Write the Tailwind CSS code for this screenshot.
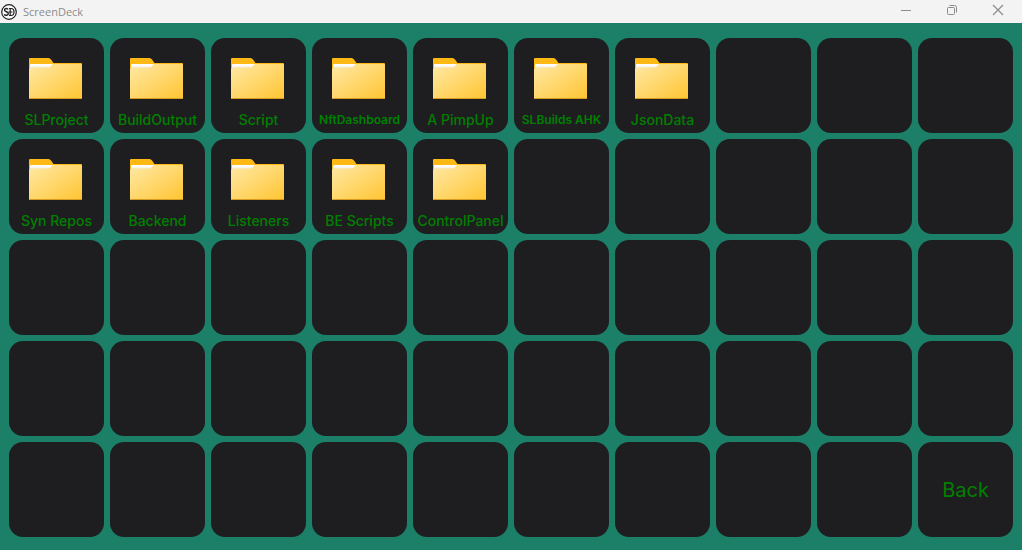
<!DOCTYPE html>
<html lang="en">
<head>
<meta charset="utf-8">
<meta name="viewport" content="width=device-width, initial-scale=1">
<title>ScreenDeck</title>
<script src="https://cdn.jsdelivr.net/npm/@tailwindcss/browser@4"></script>
</head>
<body class="flex min-h-screen flex-col bg-[#1c7f67] font-['Inter',sans-serif]">
<svg class="size-0" aria-hidden="true">
  <defs>
    <linearGradient id="front" x1="0" y1="0" x2="1" y2="1"><stop offset="0" stop-color="#ffe9a6"/><stop offset="1" stop-color="#ffc532"/></linearGradient>
    <linearGradient id="shine" x1="0" y1="0" x2="0" y2="1"><stop offset="0" stop-color="#ffffff"/><stop offset=".4" stop-color="#fbfaf6"/><stop offset="1" stop-color="#e6dcc0"/></linearGradient>
    <symbol id="folder" viewBox="0 0 53 41">
      <path d="M1 0H19.5Q21 0 22 1.5L24.5 5H52Q53 5 53 6V20H0V1Q0 0 1 0Z" fill="#ffb914"/>
      <path d="M0 11L2 9H20.500L24 6H52Q53 6 53 7V40Q53 41 52 41H1Q0 41 0 40Z" fill="url(#front)"/>
      <path d="M2 6H24L20.500 9.500H3L1 11V7Q1 6 2 6Z" fill="url(#shine)"/>
      <path d="M1 40.500H52" stroke="#d99a20" fill="none"/>
    </symbol>
  </defs>
</svg>
<header class="flex h-[23px] items-start justify-between bg-[#f3f3f3] pr-px pl-px text-[#8c8c8c]">
  <div class="flex h-full items-center gap-[6px]">
    <svg class="size-4" viewBox="0 0 16 16" fill="none" stroke="#222" aria-hidden="true">
      <circle cx="8" cy="8" r="7.300" fill="#fafafa" stroke-width="1.200"/>
      <path d="M7 5.500C6.500 4 3.500 4 3.500 6S7.300 7.500 7.300 9.500 4 12 3.300 10.200" stroke-width="1.400"/>
      <path d="M8 4.500H10C14 4.500 14 11.500 10 11.500H8M9.200 4.500V11.500M7.500 8H11.500" stroke-width="1.200"/>
    </svg>
    <h1 class="font-['Open_Sans',sans-serif] text-[11px] leading-4">ScreenDeck</h1>
  </div>
  <div class="flex">
    <button type="button" aria-label="Minimize" class="flex h-5 w-[46px] items-center justify-center"><svg class="size-3" viewBox="0 0 12 12" fill="none" stroke="currentColor"><path d="M1 6.500H11"/></svg></button>
    <button type="button" aria-label="Restore" class="flex h-5 w-[46px] items-center justify-center"><svg class="size-3" viewBox="0 0 12 12" fill="none" stroke="currentColor"><rect x="1.500" y="3.500" width="7" height="7" rx="1"/><path d="M3.500 1.500H8.500Q10.500 1.500 10.500 3.500V8.500"/></svg></button>
    <button type="button" aria-label="Close" class="flex h-5 w-[46px] items-center justify-center"><svg class="size-3" viewBox="0 0 12 12" fill="none" stroke="currentColor" stroke-width="1.200"><path d="M1 1L11 11M11 1L1 11"/></svg></button>
  </div>
</header>
<main class="grid grid-cols-10 gap-[6px] px-[9px] pt-[15px] pb-[13px] text-sm leading-5 font-medium whitespace-nowrap text-[#008000] *:flex *:aspect-square *:min-w-0 *:flex-col *:items-center *:rounded-[14px] *:bg-[#1e1e20]">
  <button type="button" class="pt-5"><svg class="mr-[2px] mb-[11px] h-[41px] w-[53px]" aria-hidden="true"><use href="#folder"/></svg>SLProject</button>
  <button type="button" class="pt-5"><svg class="mr-[2px] mb-[11px] h-[41px] w-[53px]" aria-hidden="true"><use href="#folder"/></svg>BuildOutput</button>
  <button type="button" class="pt-5"><svg class="mr-[2px] mb-[11px] h-[41px] w-[53px]" aria-hidden="true"><use href="#folder"/></svg>Script</button>
  <button type="button" class="pt-5 text-xs leading-5 font-semibold"><svg class="mr-[2px] mb-[11px] h-[41px] w-[53px]" aria-hidden="true"><use href="#folder"/></svg>NftDashboard</button>
  <button type="button" class="pt-5"><svg class="mr-[2px] mb-[11px] h-[41px] w-[53px]" aria-hidden="true"><use href="#folder"/></svg>A PimpUp</button>
  <button type="button" class="pt-5 text-xs leading-5 font-semibold"><svg class="mr-[2px] mb-[11px] h-[41px] w-[53px]" aria-hidden="true"><use href="#folder"/></svg>SLBuilds AHK</button>
  <button type="button" class="pt-5"><svg class="mr-[2px] mb-[11px] h-[41px] w-[53px]" aria-hidden="true"><use href="#folder"/></svg>JsonData</button>
  <button type="button" aria-label="Empty"></button><button type="button" aria-label="Empty"></button><button type="button" aria-label="Empty"></button>

  <button type="button" class="pt-5"><svg class="mr-[2px] mb-[11px] h-[41px] w-[53px]" aria-hidden="true"><use href="#folder"/></svg>Syn Repos</button>
  <button type="button" class="pt-5"><svg class="mr-[2px] mb-[11px] h-[41px] w-[53px]" aria-hidden="true"><use href="#folder"/></svg>Backend</button>
  <button type="button" class="pt-5"><svg class="mr-[2px] mb-[11px] h-[41px] w-[53px]" aria-hidden="true"><use href="#folder"/></svg>Listeners</button>
  <button type="button" class="pt-5"><svg class="mr-[2px] mb-[11px] h-[41px] w-[53px]" aria-hidden="true"><use href="#folder"/></svg>BE Scripts</button>
  <button type="button" class="pt-5"><svg class="mr-[2px] mb-[11px] h-[41px] w-[53px]" aria-hidden="true"><use href="#folder"/></svg>ControlPanel</button>
  <button type="button" aria-label="Empty"></button><button type="button" aria-label="Empty"></button><button type="button" aria-label="Empty"></button><button type="button" aria-label="Empty"></button><button type="button" aria-label="Empty"></button>

  <button type="button" aria-label="Empty"></button><button type="button" aria-label="Empty"></button><button type="button" aria-label="Empty"></button><button type="button" aria-label="Empty"></button><button type="button" aria-label="Empty"></button>
  <button type="button" aria-label="Empty"></button><button type="button" aria-label="Empty"></button><button type="button" aria-label="Empty"></button><button type="button" aria-label="Empty"></button><button type="button" aria-label="Empty"></button>

  <button type="button" aria-label="Empty"></button><button type="button" aria-label="Empty"></button><button type="button" aria-label="Empty"></button><button type="button" aria-label="Empty"></button><button type="button" aria-label="Empty"></button>
  <button type="button" aria-label="Empty"></button><button type="button" aria-label="Empty"></button><button type="button" aria-label="Empty"></button><button type="button" aria-label="Empty"></button><button type="button" aria-label="Empty"></button>

  <button type="button" aria-label="Empty"></button><button type="button" aria-label="Empty"></button><button type="button" aria-label="Empty"></button><button type="button" aria-label="Empty"></button><button type="button" aria-label="Empty"></button>
  <button type="button" aria-label="Empty"></button><button type="button" aria-label="Empty"></button><button type="button" aria-label="Empty"></button><button type="button" aria-label="Empty"></button>
  <button type="button" class="justify-center text-xl font-normal">Back</button>
</main>
</body>
</html>
